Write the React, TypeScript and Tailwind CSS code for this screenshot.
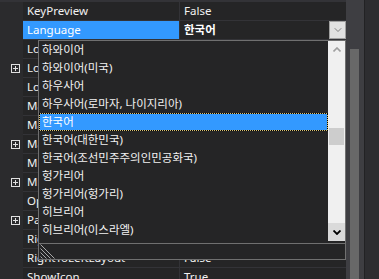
import { ChevronDown } from 'lucide-react'

interface PropRow {
  name: string
  value?: string
  expand?: boolean
  selected?: boolean
}

// rows 2..12 sit under the open language list, their values are not shown
const rows: PropRow[] = [
  { name: 'KeyPreview', value: 'False' },
  { name: 'Language', value: '한국어', selected: true },
  { name: 'Localizable' },
  { name: 'Location', expand: true },
  { name: 'Locked' },
  { name: 'MainMenuStrip' },
  { name: 'MaximizeBox' },
  { name: 'MaximumSize', expand: true },
  { name: 'MinimizeBox' },
  { name: 'MinimumSize', expand: true },
  { name: 'Opacity' },
  { name: 'Padding', expand: true },
  { name: 'RightToLeft' },
  { name: 'RightToLeftLayout', value: 'False' },
  { name: 'ShowIcon', value: 'True' },
]

const languages = [
  '하와이어',
  '하와이어(미국)',
  '하우사어',
  '하우사어(로마자, 나이지리아)',
  '한국어',
  '한국어(대한민국)',
  '한국어(조선민주주의인민공화국)',
  '헝가리어',
  '헝가리어(헝가리)',
  '히브리어',
  '히브리어(이스라엘)',
]

function PlusBox() {
  return (
    <svg width="9" height="9" viewBox="0 0 9 9" className="block">
      <rect x="0.5" y="0.5" width="8" height="8" fill="none" stroke="#e0e0e0" />
      <path d="M2 4.5h5M4.5 2v5" stroke="#e0e0e0" />
    </svg>
  )
}

function Grip() {
  return (
    <svg width="16" height="15" viewBox="0 0 16 15" className="block">
      <g stroke="#a8a8a8" strokeWidth="1">
        <path d="M0.5 0.5l14 14" />
        <path d="M0.5 4.5l10 10" />
        <path d="M0.5 8.5l6 6" />
        <path d="M0.5 12.5l2 2" />
      </g>
    </svg>
  )
}

function LanguageDropDown() {
  return (
    <div className="absolute left-[38px] top-[40px] w-[308px] h-[220px] border border-[#707070] bg-[#252526] flex flex-col">
      <div className="flex h-[200px]">
        <div className="flex-1 flex flex-col">
          {languages.map((lang) =>
            lang === '한국어' ? (
              <div key={lang} className="h-[18px] bg-[#d8c070] border border-dotted border-black">
                <div className="h-full bg-[#3399ff] pl-[2px] leading-[16px] text-white whitespace-nowrap">{lang}</div>
              </div>
            ) : (
              <div key={lang} className="h-[18px] pl-[3px] leading-[18px] text-[#f1f1f1] whitespace-nowrap">
                {lang}
              </div>
            )
          )}
        </div>
        <div className="w-[17px] bg-[#f0f0f0] flex flex-col">
          <div className="h-[17px] flex items-center justify-center">
            <svg width="8" height="5" viewBox="0 0 8 5">
              <path d="M0.5 4.5L4 1l3.5 3.5" fill="none" stroke="#a0a0a0" strokeWidth="1.6" />
            </svg>
          </div>
          <div className="h-[70px]" />
          <div className="h-[17px] mx-[1px] bg-[#cdcdcd]" />
          <div className="flex-1" />
          <div className="h-[18px] bg-[#dadada] flex items-center justify-center">
            <svg width="8" height="5" viewBox="0 0 8 5">
              <path d="M0.5 0.5L4 4l3.5-3.5" fill="none" stroke="#000" strokeWidth="1.8" />
            </svg>
          </div>
        </div>
      </div>
      <div className="h-[2px]" />
      <div className="h-px bg-[#707070]" />
      <div className="flex-1 flex items-end pl-[1px]">
        <Grip />
      </div>
    </div>
  )
}

export default function App() {
  return (
    <div className="relative w-[379px] h-[279px] overflow-hidden bg-[#252526] text-[11.5px] font-['Noto_Sans','Noto_Sans_CJK_KR',sans-serif] flex">
      <div className="w-[346px] flex flex-col pt-[2px] bg-[#333337]">
        {rows.map((row) => (
          <div key={row.name} className="flex h-[19px] shrink-0">
            <div className="w-[23px] bg-[#2b2b2d] flex items-center pl-[11px]">
              {row.expand && <PlusBox />}
            </div>
            <div className="flex flex-1 border-b border-[#333337]">
              <div
                className={`w-[156px] pl-[4px] leading-[18px] whitespace-nowrap overflow-hidden ${
                  row.selected ? 'bg-[#3399ff] text-white' : 'bg-[#252526] text-[#f1f1f1]'
                }`}
              >
                {row.name}
              </div>
              <div className="w-px bg-[#333337]" />
              <div className="flex-1 flex bg-[#252526]">
                <div
                  className={`flex-1 pl-[4px] leading-[18px] whitespace-nowrap overflow-hidden ${
                    row.selected ? 'font-bold text-white' : 'text-[#f1f1f1]'
                  }`}
                >
                  {row.value}
                </div>
                {row.selected && (
                  <div className="w-[17px] h-[18px] bg-[#e1e1e1] border border-[#a0a0a0] flex items-center justify-center">
                    <ChevronDown size={12} strokeWidth={1.5} color="#606060" />
                  </div>
                )}
              </div>
            </div>
          </div>
        ))}
      </div>
      <div className="w-[18px] bg-[#3e3e42] flex flex-col pt-[49px] pl-[4px]">
        <div className="w-[9px] flex-1 bg-[#686868]" />
      </div>
      <div className="w-px bg-[#222224]" />
      <div className="w-[14px] bg-[#2d2d30]" />
      <LanguageDropDown />
    </div>
  )
}
